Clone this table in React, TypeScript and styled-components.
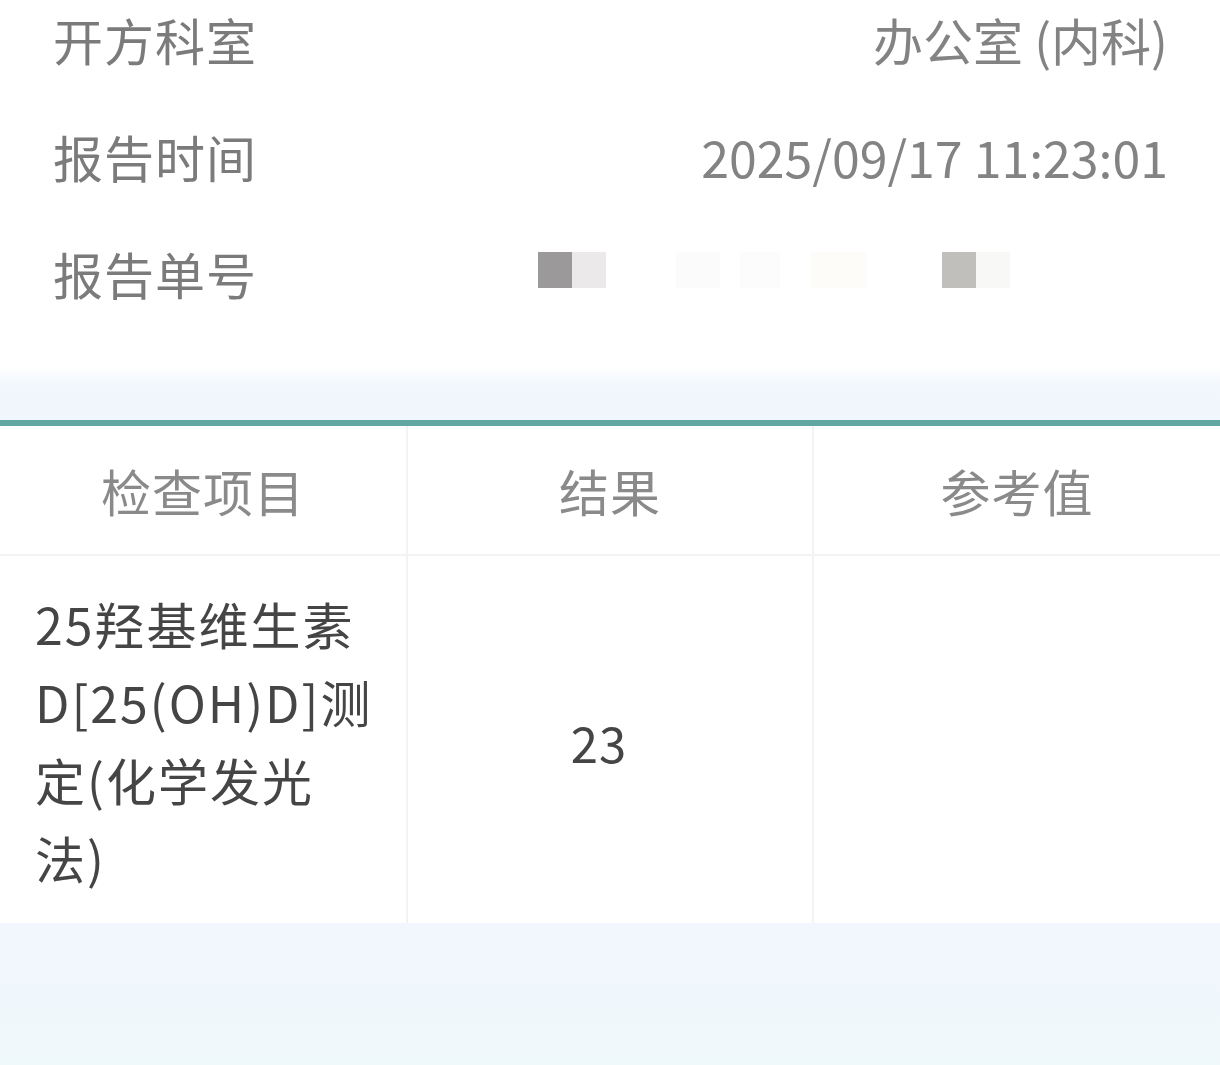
import React from "react";
import styled, { createGlobalStyle } from "styled-components";

const Global = createGlobalStyle`
  html, body { margin: 0; padding: 0; background: #ffffff; }
  body { font-family: "Noto Sans CJK SC", "Noto Sans", sans-serif; }
`;

const Page = styled.div`
  width: 1220px;
  height: 1065px;
  overflow: hidden;
  display: flex;
  flex-direction: column;
  background: #ffffff;
`;

const Info = styled.section`
  display: flex;
  flex-direction: column;
  gap: 57px;
  padding: 9px 52px 63px 53px;
`;

const InfoRow = styled.div`
  display: flex;
  justify-content: space-between;
  align-items: center;
  height: 60px;
`;

const Label = styled.span`
  font-size: 50px;
  line-height: 60px;
  color: #7b7b7b;
  letter-spacing: 1px;
`;

const Value = styled.span`
  font-size: 50px;
  line-height: 60px;
  color: #838383;
`;

const Masked = styled.div`
  display: flex;
  align-self: flex-start;
  margin-top: 9px;
  margin-right: 158px;
`;

const Pixel = styled.span<{ $c: string; $w?: number; $gap?: number }>`
  display: block;
  width: ${(p) => p.$w ?? 34}px;
  height: 36px;
  background: ${(p) => p.$c};
  margin-left: ${(p) => p.$gap ?? 0}px;
`;

const Band = styled.div`
  height: 54px;
  background: linear-gradient(to bottom, #ffffff 0%, #f2f7fd 35%, #f0f6fd 100%);
`;

const TealLine = styled.div`
  height: 6px;
  background: #60a6a1;
  box-shadow: 0 1px 2px #dff7f7;
`;

const Table = styled.div`
  display: grid;
  grid-template-columns: 408px 406px 406px;
  background: #ffffff;
`;

const HeadCell = styled.div<{ $last?: boolean }>`
  height: 130px;
  display: flex;
  align-items: center;
  justify-content: center;
  font-size: 50px;
  color: #8a8a8a;
  letter-spacing: 1px;
  border-bottom: 2px solid #f3f3f3;
  border-right: ${(p) => (p.$last ? "none" : "2px solid #f3f3f3")};
  box-sizing: border-box;
`;

const BodyCell = styled.div<{ $last?: boolean; $align?: string }>`
  height: 367px;
  display: flex;
  align-items: center;
  justify-content: ${(p) => p.$align ?? "center"};
  padding: 0 0 0 ${(p) => (p.$align === "flex-start" ? "35px" : "0")};
  font-size: 48px;
  line-height: 78px;
  color: #454545;
  border-right: ${(p) => (p.$last ? "none" : "2px solid #f3f3f3")};
  box-sizing: border-box;
`;

const ItemName = styled.div`
  display: flex;
  flex-direction: column;
  font-size: 50px;
  letter-spacing: 2px;
`;

const Result = styled.span`
  margin-right: 22px;
  margin-top: 4px;
  font-size: 49px;
  letter-spacing: 1px;
`;

const Footer = styled.div`
  flex: 1;
  background: linear-gradient(to bottom, #f2f7fd 0%, #eff8fb 100%);
`;

export default function App() {
  return (
    <Page>
      <Global />
      <Info>
        <InfoRow>
          <Label>开方科室</Label>
          <Value>办公室 (内科)</Value>
        </InfoRow>
        <InfoRow>
          <Label>报告时间</Label>
          <Value>2025/09/17 11:23:01</Value>
        </InfoRow>
        <InfoRow>
          <Label>报告单号</Label>
          <Masked>
            <Pixel $c="#9b999a" />
            <Pixel $c="#ebe9ea" />
            <Pixel $c="#fbfbfb" $w={44} $gap={70} />
            <Pixel $c="#fcfcfc" $w={40} $gap={20} />
            <Pixel $c="#fdfcf8" $w={56} $gap={30} />
            <Pixel $c="#c1bfbc" $gap={76} />
            <Pixel $c="#f8f8f7" />
          </Masked>
        </InfoRow>
      </Info>
      <Band />
      <TealLine />
      <Table>
        <HeadCell>检查项目</HeadCell>
        <HeadCell>结果</HeadCell>
        <HeadCell $last>参考值</HeadCell>
        <BodyCell $align="flex-start">
          <ItemName>
            <span>25羟基维生素</span>
            <span>D[25(OH)D]测</span>
            <span>定(化学发光</span>
            <span>法)</span>
          </ItemName>
        </BodyCell>
        <BodyCell>
          <Result>23</Result>
        </BodyCell>
        <BodyCell $last />
      </Table>
      <Footer />
    </Page>
  );
}
